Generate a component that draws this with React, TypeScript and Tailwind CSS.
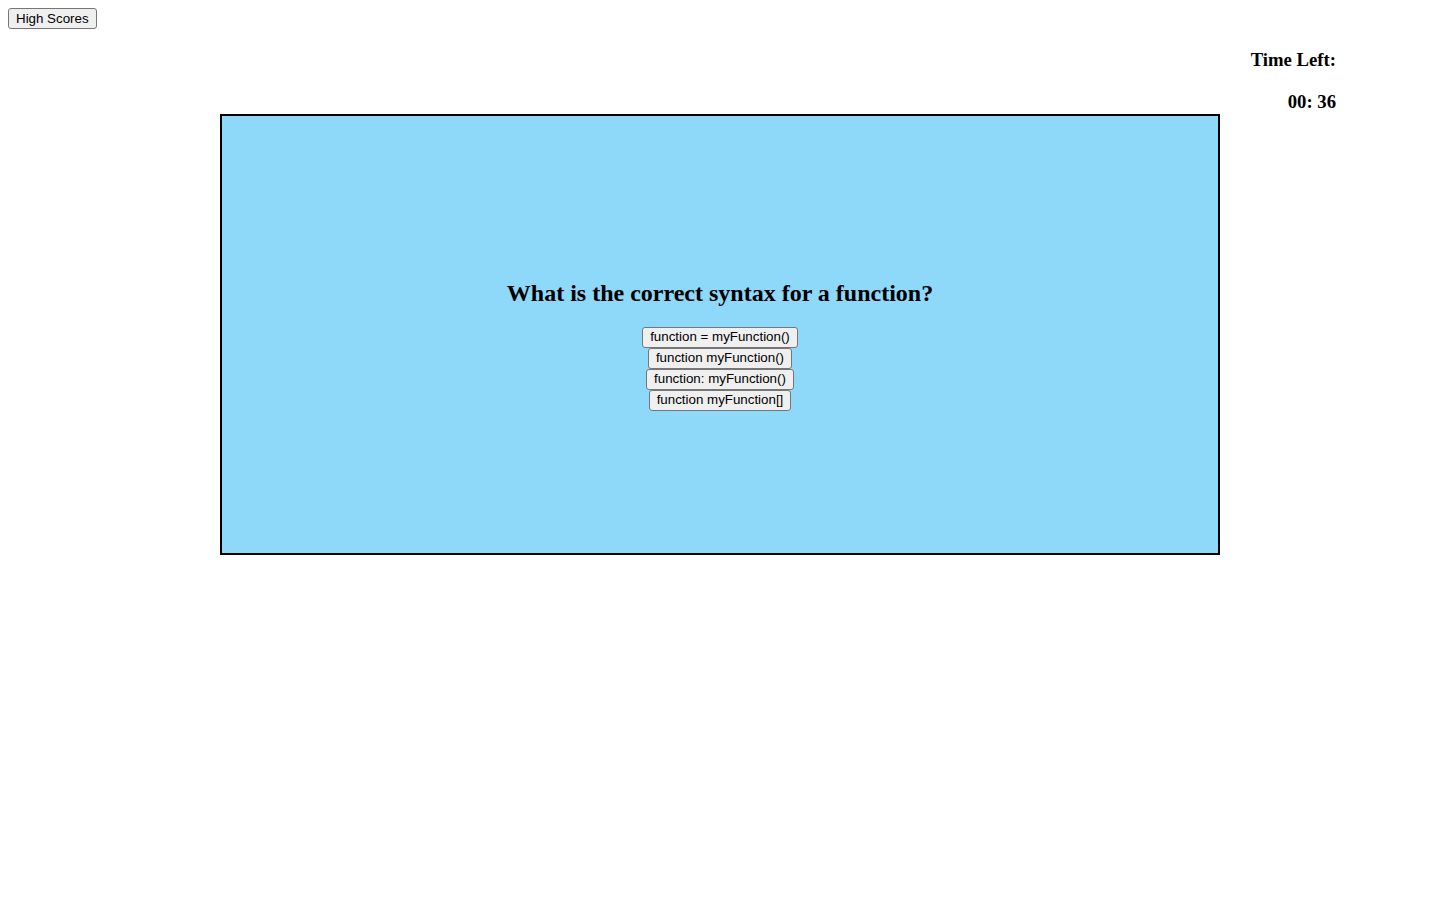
const answers = [
  "function = myFunction()",
  "function myFunction()",
  "function: myFunction()",
  "function myFunction[]",
];

const btn =
  "h-[21px] px-[7px] bg-[#efefef] border border-[#767676] rounded-[3px] text-[13.333px] leading-none text-black font-['Liberation_Sans',Arial,sans-serif] hover:bg-[#e5e5e5]";

export default function App() {
  return (
    <div className="min-h-screen bg-white text-black font-['Liberation_Serif','Times_New_Roman',serif]">
      {/* header */}
      <div className="flex px-[8px] pt-[8px]">
        <button className={btn}>High Scores</button>
      </div>

      {/* timer */}
      <div className="flex justify-end pr-[104px] pb-[1px]">
        <div className="flex flex-col items-end text-[18.72px] font-bold leading-[22px]">
          <h3 className="mt-[20px]">Time Left:</h3>
          <h3 className="mt-[20px]">00: 36</h3>
        </div>
      </div>

      {/* quiz card */}
      <div className="mx-auto w-[1000px] h-[441px] border-2 border-black bg-[#8ed8fa] flex flex-col items-center justify-center">
        <h2 className="my-[20px] text-[24px] font-bold leading-[28px]">
          What is the correct syntax for a function?
        </h2>
        <div className="flex flex-col items-center">
          {answers.map((a) => (
            <button key={a} className={btn}>
              {a}
            </button>
          ))}
        </div>
      </div>
    </div>
  );
}
